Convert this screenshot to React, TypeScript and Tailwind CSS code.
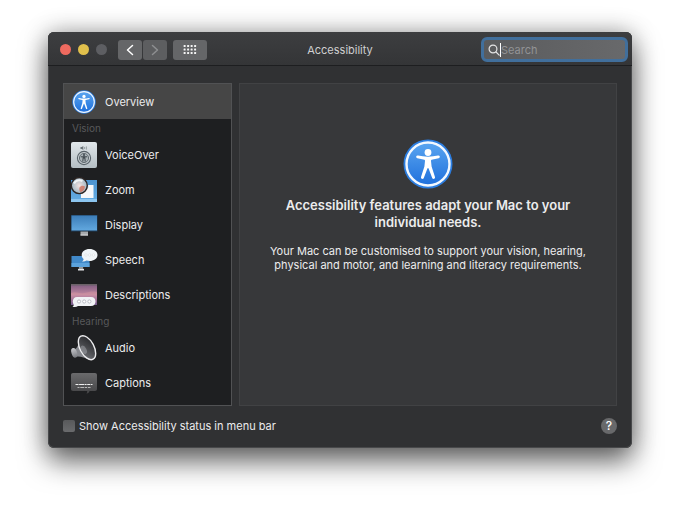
import React from 'react';

const Person: React.FC = () => (
  <g fill="#fff">
    <circle cx="25" cy="13.5" r="3.4" />
    <path d="M13.2 17.6c.2-.9 1-1.2 1.800-1 6.400 1.500 13.600 1.500 20 0 .8-.2 1.600.1 1.800 1 .2.900-.4 1.500-1.200 1.700l-7 1.500c-.5.2-.7.5-.6 1.200l.6 5.500 3.300 10.300c.3.900 0 1.700-.8 2s-1.600-.1-1.900-.9L25.600 29.400c-.2-.7-1-.7-1.200 0l-3.600 9.500c-.3.8-1.100 1.200-1.900.9s-1.100-1.100-.8-2l3.300-10.300.6-5.500c.1-.7-.1-1-.6-1.200l-7-1.500c-.8-.2-1.400-.8-1.200-1.700z" />
  </g>
);

const AccessibilityIcon: React.FC<{ id: string; className: string }> = ({ id, className }) => (
  <svg viewBox="0 0 50 50" className={className} aria-hidden="true">
    <defs>
      <linearGradient id={id} x1="0" y1="0" x2="0" y2="1">
        <stop offset="0" stopColor="#5aa5f0" />
        <stop offset="1" stopColor="#1f70dc" />
      </linearGradient>
    </defs>
    <circle cx="25" cy="25" r="24.500" fill="#2b7de0" />
    <circle cx="25" cy="25" r="21.500" fill={`url(#${id})`} stroke="#f2f8ff" strokeWidth="2.400" />
    <Person />
  </svg>
);

const OverviewIcon: React.FC = () => (
  <AccessibilityIcon id="overviewBlue" className="h-6 w-6" />
);

const VoiceOverIcon: React.FC = () => (
  <svg viewBox="0 0 26 26" className="h-[26px] w-[26px]" aria-hidden="true">
    <defs>
      <linearGradient id="voicePlate" x1="0" y1="0" x2="0" y2="1">
        <stop offset="0" stopColor="#e1e7ea" />
        <stop offset="1" stopColor="#b4bec3" />
      </linearGradient>
    </defs>
    <rect width="26" height="26" rx="2" fill="url(#voicePlate)" />
    <path d="M9.500 5h1.300L12.300 4v4l-1.500-1H9.500z" fill="#6c757a" />
    <path d="M13.600 5v2M15.400 4.400v3.200" stroke="#7f888c" strokeWidth=".7" />
    <circle cx="13" cy="16" r="6.600" fill="#c9d0d3" stroke="#59636a" strokeWidth="1.100" />
    <circle cx="13" cy="16" r="4.600" fill="#aab3b7" stroke="#59636a" strokeWidth=".9" />
    <circle cx="13" cy="13" r="1" fill="#3d464c" />
    <path d="M9.800 14.800h6.400M13 14.800v2.200M11.800 19.600l.4-4.500h1.600l.4 4.500" fill="none" stroke="#3d464c" strokeWidth="1" />
  </svg>
);

const ZoomIcon: React.FC = () => (
  <svg viewBox="0 0 28 26" className="h-[26px] w-7" aria-hidden="true">
    <defs>
      <linearGradient id="zoomBlue" x1="0" y1="0" x2="0" y2="1">
        <stop offset="0" stopColor="#4b93d0" />
        <stop offset="1" stopColor="#67aee4" />
      </linearGradient>
      <radialGradient id="zoomLens">
        <stop offset="0" stopColor="#f4e2df" />
        <stop offset="1" stopColor="#9eb6c4" />
      </radialGradient>
    </defs>
    <rect x="1" y="3" width="26" height="22" fill="url(#zoomBlue)" />
    <path d="M1 22h26v3H1z" fill="#8cc5ef" />
    <path d="M11 11h7V8h5.500v13H11z" fill="#f7f8fa" />
    <path d="M18 8v3h-4" fill="none" stroke="#c5d8e7" strokeWidth=".8" />
    <circle cx="9.300" cy="8.600" r="8" fill="url(#zoomLens)" stroke="#2c2422" strokeWidth="1.400" />
    <path d="M9.500 10.500c1.500-2 3.500-2 5.500-1-.2 3-1.800 5-4.500 5.800-1.200-1.500-1.500-3-1-4.800z" fill="#d0705e" opacity=".8" />
    <path d="M4 6.500C5.500 3.500 9 2.500 12.500 4" fill="none" stroke="#fff" strokeWidth="2.200" opacity=".8" />
  </svg>
);

const DisplayIcon: React.FC = () => (
  <svg viewBox="0 0 28 26" className="h-[26px] w-7" aria-hidden="true">
    <defs>
      <linearGradient id="displayBlue" x1="0" y1="0" x2="0" y2="1">
        <stop offset="0" stopColor="#3c7db9" />
        <stop offset="1" stopColor="#62a8df" />
      </linearGradient>
    </defs>
    <rect x="1" y="3" width="26.500" height="16.500" fill="#1c3a56" />
    <rect x="1.500" y="3.500" width="25.500" height="15" fill="url(#displayBlue)" />
    <rect x="10.500" y="19.500" width="7.500" height="4" fill="#a8abae" />
    <rect x="10.500" y="22.500" width="7.500" height="1" fill="#d7d9db" />
  </svg>
);

const SpeechIcon: React.FC = () => (
  <svg viewBox="0 0 28 26" className="h-[26px] w-7" aria-hidden="true">
    <rect x="1.500" y="9" width="18" height="11" fill="#4189c9" />
    <path d="M1.500 16h18v4h-18z" fill="#5ba2dc" />
    <path d="M9 20h4l.5 2.500h-5z" fill="#94999d" />
    <path d="M8 22h6v1.500H8z" fill="#e6e8ea" />
    <path d="M19.500 2C24 2 27.500 4.400 27.500 8s-3.500 6-8 6c-1 0-2-.1-3-.4-1.200.8-3 1.200-4.500.9 1-.6 1.500-1.500 1.600-2.500-1.200-1-1.900-2.400-1.900-4 0-3.600 3.400-6 7.800-6z" fill="#f0f4f7" />
    <g fill="#fff" stroke="#d3d9dd" strokeWidth=".6">
      <circle cx="16" cy="8" r="1.200" />
      <circle cx="19.700" cy="8" r="1.200" />
      <circle cx="23.400" cy="8" r="1.200" />
    </g>
  </svg>
);

const DescriptionsIcon: React.FC = () => (
  <svg viewBox="0 0 28 26" className="h-[26px] w-7" aria-hidden="true">
    <defs>
      <linearGradient id="sunset" x1="0" y1="0" x2="0" y2="1">
        <stop offset="0" stopColor="#7d5a80" />
        <stop offset=".55" stopColor="#c58ba3" />
        <stop offset="1" stopColor="#73598b" />
      </linearGradient>
    </defs>
    <rect x="1" y="2" width="26" height="21" fill="url(#sunset)" />
    <path d="M1 2h26v1.500H1z" fill="#6b6268" />
    <path d="M1 11c5-2 8 1 13 0s8-2 13-1v3H1z" fill="#e3a1a4" opacity=".35" />
    <path d="M7 15h14c3 0 4.500 2 4.500 4.500S24 24 21 24H8c-1.500 1.200-3.500 1.300-5.500.7 1-.6 1.300-1.400 1.200-2.200-.5-.8-.9-1.800-.9-3C2.800 17 4.500 15 7 15z" fill="#f0f2f5" />
    <g fill="#fff" stroke="#b4b7c0" strokeWidth=".9">
      <circle cx="9" cy="19.500" r="1.600" />
      <circle cx="14.200" cy="19.500" r="1.600" />
      <circle cx="19.400" cy="19.500" r="1.600" />
    </g>
  </svg>
);

const AudioIcon: React.FC = () => (
  <svg viewBox="0 0 28 28" className="h-7 w-7" aria-hidden="true">
    <defs>
      <linearGradient id="speakerCone" x1="0" y1="1" x2="1" y2="0">
        <stop offset="0" stopColor="#77797e" />
        <stop offset=".45" stopColor="#4c4d51" />
        <stop offset="1" stopColor="#1f2023" />
      </linearGradient>
      <linearGradient id="speakerBack" x1="0" y1="0" x2="0" y2="1">
        <stop offset="0" stopColor="#c9cace" />
        <stop offset="1" stopColor="#77797f" />
      </linearGradient>
    </defs>
    <path d="M9.500 3C9.500 9 8 13 5 15.500l1.500 7c4-.5 8 1 13 3.500z" fill="#85878d" />
    <ellipse cx="4.300" cy="18.800" rx="2.800" ry="5" transform="rotate(-18 4.300 18.800)" fill="url(#speakerBack)" />
    <ellipse cx="17" cy="13.700" rx="7" ry="13" transform="rotate(-28 17 13.700)" fill="url(#speakerCone)" stroke="#ededef" strokeWidth="1.400" />
    <ellipse cx="13.800" cy="15.800" rx="2.600" ry="4.500" transform="rotate(-28 13.800 15.800)" fill="#a7a9af" opacity=".5" />
  </svg>
);

const CaptionsIcon: React.FC = () => (
  <svg viewBox="0 0 28 26" className="h-[26px] w-7" aria-hidden="true">
    <defs>
      <linearGradient id="captionPlate" x1="0" y1="0" x2="0" y2="1">
        <stop offset="0" stopColor="#6a6a6c" />
        <stop offset="1" stopColor="#444446" />
      </linearGradient>
    </defs>
    <path d="M3 3h22c1.200 0 2 .8 2 2v14c0 1.200-.8 2-2 2h-5.500c-.2 1.300-1.200 2.300-3 2.700.6-.8.800-1.700.7-2.700H3c-1.200 0-2-.8-2-2V5c0-1.200.8-2 2-2z" fill="url(#captionPlate)" />
    <path d="M5.500 14.500h17" stroke="#f1f1f1" strokeWidth="1.100" strokeDasharray="3 .6 5 .5 2 .6" />
    <path d="M7.500 17.500h13" stroke="#c5c5c5" strokeWidth=".9" strokeDasharray="2 .8 4 .7" />
  </svg>
);

const sections = [
  {
    title: '',
    items: [{ name: 'Overview', icon: OverviewIcon }]
  },
  {
    title: 'Vision',
    items: [
      { name: 'VoiceOver', icon: VoiceOverIcon },
      { name: 'Zoom', icon: ZoomIcon },
      { name: 'Display', icon: DisplayIcon },
      { name: 'Speech', icon: SpeechIcon },
      { name: 'Descriptions', icon: DescriptionsIcon }
    ]
  },
  {
    title: 'Hearing',
    items: [
      { name: 'Audio', icon: AudioIcon },
      { name: 'Captions', icon: CaptionsIcon }
    ]
  }
];

const TitleBar: React.FC = () => (
  <header className="grid grid-cols-[1fr_auto_1fr] items-center rounded-t-md border-b border-[#1d1e20] bg-linear-to-b from-[#3d3e40] to-[#343537] px-1 pt-[5px] pb-[3px]">
    <div className="flex items-center pl-2">
      <div className="flex gap-[7px]">
        <button aria-label="Close" className="h-[11px] w-[11px] rounded-full bg-[#ee6a5f]" />
        <button aria-label="Minimise" className="h-[11px] w-[11px] rounded-full bg-[#e1c04c]" />
        <button aria-label="Full screen" className="h-[11px] w-[11px] rounded-full bg-[#5d5e62]" />
      </div>
      <div className="ml-[11px] flex gap-px">
        <button aria-label="Back" className="flex h-5 w-6 items-center justify-center rounded-[3px] bg-[#656668] text-white">
          <svg viewBox="0 0 8 12" className="h-3 w-2" fill="none" stroke="currentColor" strokeWidth="1.500" strokeLinecap="round" strokeLinejoin="round">
            <path d="M6.500 1.500 1.500 6l5 4.500" />
          </svg>
        </button>
        <button aria-label="Forward" className="flex h-5 w-6 items-center justify-center rounded-[3px] bg-[#5d5e60] text-[#8e8f91]">
          <svg viewBox="0 0 8 12" className="h-3 w-2" fill="none" stroke="currentColor" strokeWidth="1.500" strokeLinecap="round" strokeLinejoin="round">
            <path d="m1.500 1.500 5 4.500-5 4.500" />
          </svg>
        </button>
      </div>
      <button aria-label="Show all" className="ml-1.5 flex h-5 w-[34px] items-center justify-center rounded-[3px] bg-[#656668]">
        <svg viewBox="0 0 14 11" className="h-[11px] w-3.5" fill="#f4f4f4">
          {[0, 1, 2].map((row) =>
            [0, 1, 2, 3].map((col) => (
              <rect key={`${row}-${col}`} x={col * 3.5 + 0.6} y={row * 3.5 + 1} width="2" height="2" rx=".5" />
            ))
          )}
        </svg>
      </button>
    </div>
    <h1 className="text-[11px] leading-4 text-[#d0d0d1]">Accessibility</h1>
    <label className="flex h-[25px] w-[147px] items-center justify-self-end rounded-md border-[3px] border-[#416f9c] bg-linear-to-r from-[#5a5b5d] to-[#68696b] pl-1">
      <svg viewBox="0 0 12 12" className="h-3 w-3 shrink-0" fill="none" stroke="#e4e4e5" strokeWidth="1.200" strokeLinecap="round" aria-hidden="true">
        <circle cx="5" cy="5" r="3.900" />
        <path d="m8 8 3.200 3.200" />
      </svg>
      <span className="h-3.5 w-px shrink-0 bg-white" />
      <input
        type="text"
        aria-label="Search"
        placeholder="Search"
        className="w-full min-w-0 bg-transparent text-[11px] leading-4 text-white outline-none placeholder:text-[#929395]"
      />
    </label>
  </header>
);

const Sidebar: React.FC = () => (
  <nav className="w-[169px] shrink-0 border border-[#515254] bg-[#1e1f21] pb-[5px]">
    {sections.map((section) => (
      <div key={section.title}>
        {section.title && (
          <h2 className="pl-2 text-[10px] leading-[18px] text-[#58595b]">{section.title}</h2>
        )}
        {section.items.map((item) => (
          <button
            key={item.name}
            className={`flex h-[35px] w-full items-center text-left ${item.name === 'Overview' ? 'bg-[#464646]' : ''}`}
          >
            <span className="ml-1.5 flex w-7 justify-center">
              <item.icon />
            </span>
            <span className="ml-[7px]">{item.name}</span>
          </button>
        ))}
      </div>
    ))}
  </nav>
);

const App: React.FC = () => {
  return (
    <div className="min-h-screen bg-white px-12 py-8 font-['Inter','Liberation_Sans',sans-serif] text-[11px] leading-[14px] text-[#ececed]">
      <div className="rounded-md bg-[#303133] shadow-[0_14px_28px_rgba(0,0,0,0.55),0_0_24px_rgba(0,0,0,0.3),inset_0_0_0_1px_#48494b]">
        <TitleBar />

        <main className="flex gap-[7px] px-[15px] pt-[17px]">
          <Sidebar />
          <section className="flex flex-1 flex-col items-center border border-[#414244] bg-[#37383a] px-6 pt-[55px] text-center">
            <AccessibilityIcon id="heroBlue" className="h-[50px] w-[50px]" />
            <h2 className="mt-2 text-[13px] leading-[17px] font-semibold">
              Accessibility features adapt your Mac to your individual needs.
            </h2>
            <p className="mt-[13px]">
              Your Mac can be customised to support your vision, hearing, physical and motor, and learning and literacy requirements.
            </p>
          </section>
        </main>

        <footer className="flex items-center justify-between px-[15px] pt-3 pb-3.5">
          <label className="flex items-center gap-1">
            <input type="checkbox" className="h-3 w-3 appearance-none rounded-[2px] bg-linear-to-b from-[#58595b] to-[#6a6b6d]" />
            Show Accessibility status in menu bar
          </label>
          <button aria-label="Help" className="h-4 w-4 rounded-full bg-[#68696b] text-center text-[12px] leading-4 font-medium text-white">
            ?
          </button>
        </footer>
      </div>
    </div>
  );
};

export default App;
